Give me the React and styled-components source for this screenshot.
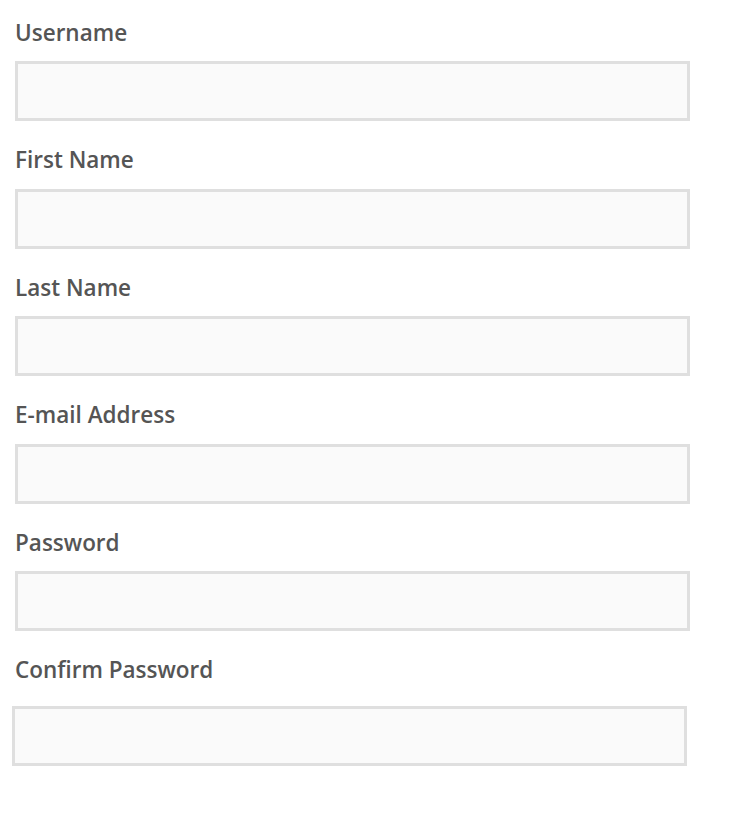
import React from "react";
import styled, { createGlobalStyle } from "styled-components";

const Global = createGlobalStyle`
  html, body { margin: 0; padding: 0; background: #ffffff; }
  body { font-family: "Open Sans", "Noto Sans", sans-serif; }
`;

const Form = styled.form`
  display: flex;
  flex-direction: column;
  padding: 17.5px 0 0 15px;
  width: 675px;
`;

const Field = styled.div`
  display: flex;
  flex-direction: column;
  margin-bottom: 24px;
`;

const Label = styled.label`
  font-size: 22.5px;
  line-height: 30px;
  font-weight: 600;
  color: #555555;
  margin-bottom: ${(p) => (p.$extra ? 20.5 : 13.5)}px;
`;

const Input = styled.input`
  box-sizing: border-box;
  height: 60px;
  width: 675px;
  margin-left: ${(p) => (p.$shift ? -3 : 0)}px;
  border: 3px solid #dfdfdf;
  background: #fafafa;
  outline: none;
  font-family: inherit;
  font-size: 18px;
  padding: 0 12px;
`;

const fields = [
  { label: "Username", type: "text" },
  { label: "First Name", type: "text" },
  { label: "Last Name", type: "text" },
  { label: "E-mail Address", type: "email" },
  { label: "Password", type: "password" },
  { label: "Confirm Password", type: "password", last: true },
];

export default function App() {
  return (
    <>
      <Global />
      <Form onSubmit={(e) => e.preventDefault()}>
        {fields.map((f) => (
          <Field key={f.label}>
            <Label $extra={f.last}>{f.label}</Label>
            <Input type={f.type} $shift={f.last} />
          </Field>
        ))}
      </Form>
    </>
  );
}
